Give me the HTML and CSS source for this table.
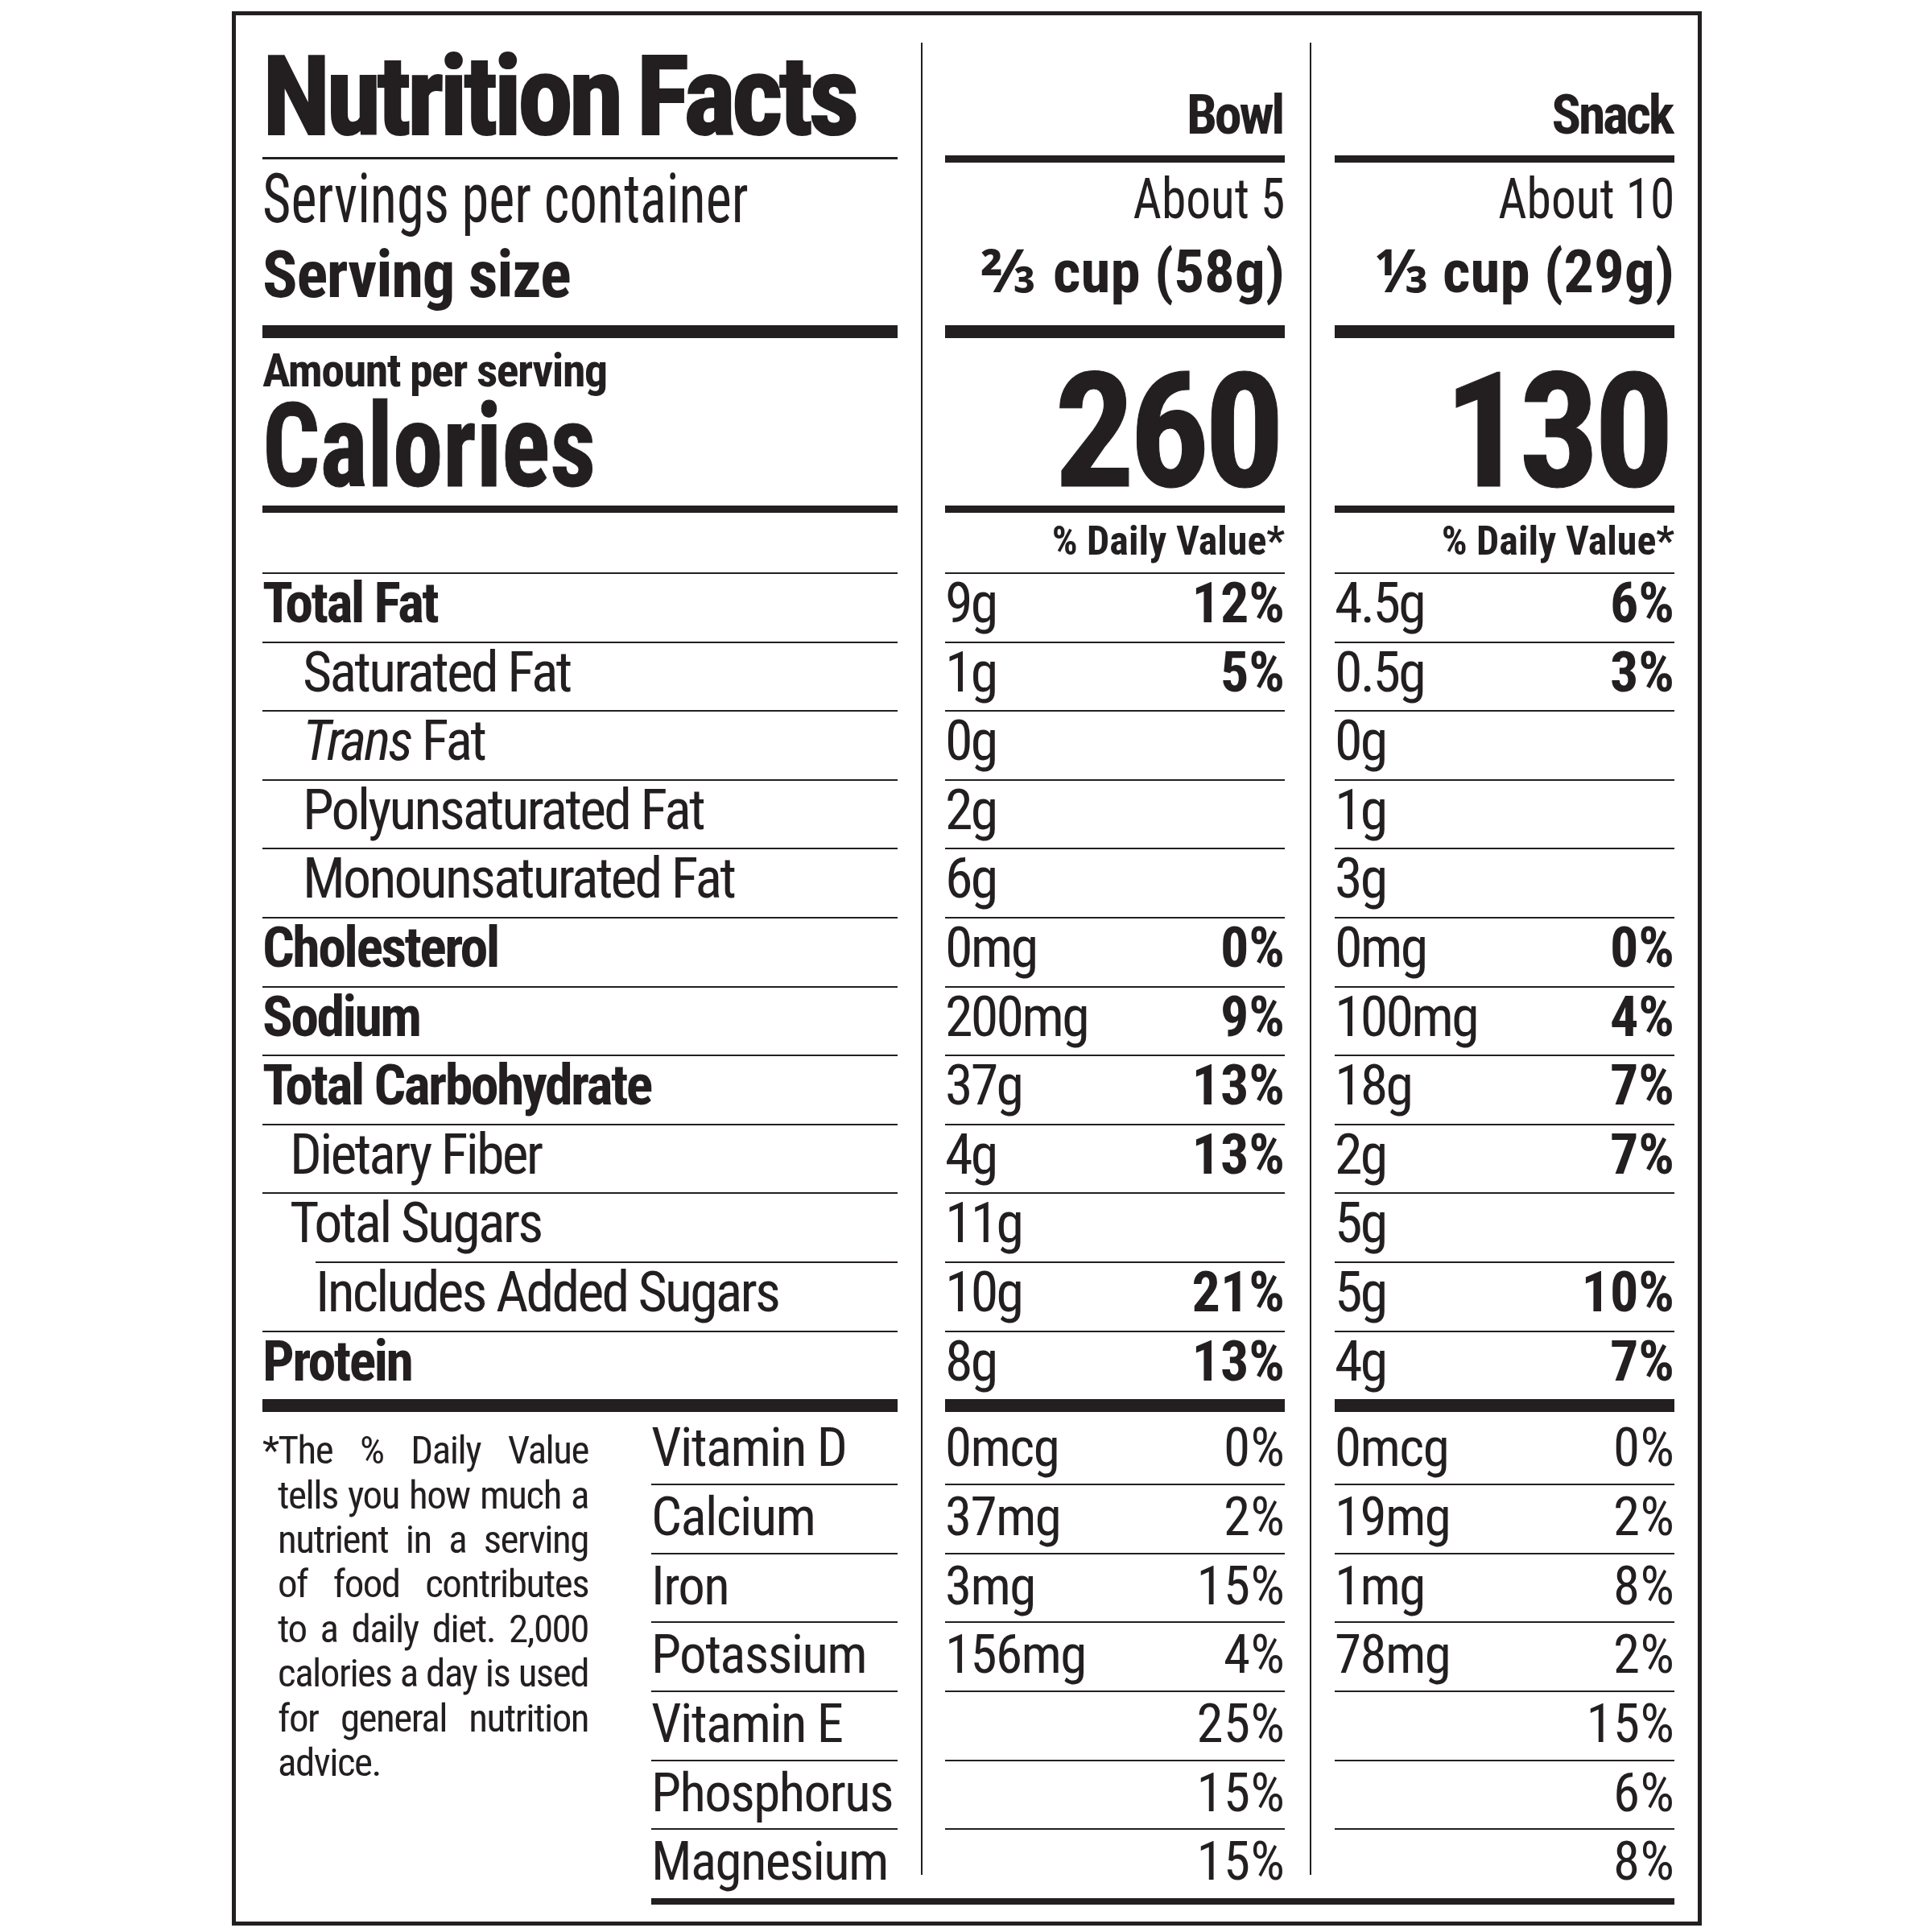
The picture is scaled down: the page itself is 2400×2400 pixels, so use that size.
FILE: index.html
```html
<!DOCTYPE html>
<html lang="en">
<head>
<meta charset="utf-8">
<title>Nutrition Facts</title>
<link rel="stylesheet" href="styles.css">
</head>
<body>
<div class="label">
  <div class="cols">
    <div class="col col-left">
      <div class="title">Nutrition Facts</div>
      <div class="serv-left">
        <div class="spc"><span class="sq sq-l">Servings per container</span></div>
        <div class="ssize">Serving size</div>
      </div>
      <div class="cal-left">
        <div class="aps">Amount per serving</div>
        <div class="calories"><span class="sq sq-l">Calories</span></div>
      </div>
      <div class="dv"></div>
      <div class="row"><span class="b">Total Fat</span></div>
      <div class="row"><span class="in1">Saturated Fat</span></div>
      <div class="row"><span class="in1"><i>Trans</i> Fat</span></div>
      <div class="row"><span class="in1">Polyunsaturated Fat</span></div>
      <div class="row"><span class="in1">Monounsaturated Fat</span></div>
      <div class="row"><span class="b">Cholesterol</span></div>
      <div class="row"><span class="b">Sodium</span></div>
      <div class="row"><span class="b">Total Carbohydrate</span></div>
      <div class="row"><span class="in2">Dietary Fiber</span></div>
      <div class="row"><span class="in2">Total Sugars</span></div>
      <div class="row row-added"><span>Includes Added Sugars</span></div>
      <div class="row"><span class="b">Protein</span></div>
      <div class="thick"></div>
      <div class="bottom">
        <div class="foot">
          <span class="fl first">*The % Daily Value</span>
          <span class="fl">tells you how much a</span>
          <span class="fl">nutrient in a serving</span>
          <span class="fl">of food contributes</span>
          <span class="fl">to a daily diet. 2,000</span>
          <span class="fl">calories a day is used</span>
          <span class="fl">for general nutrition</span>
          <span class="fl last">advice.</span>
        </div>
        <div class="vits">
          <div class="vrow">Vitamin D</div>
          <div class="vrow">Calcium</div>
          <div class="vrow">Iron</div>
          <div class="vrow">Potassium</div>
          <div class="vrow">Vitamin E</div>
          <div class="vrow">Phosphorus</div>
          <div class="vrow">Magnesium</div>
        </div>
      </div>
    </div>

    <div class="col col-num col-bowl">
      <div class="hdr">Bowl</div>
      <div class="serv">
        <div class="about"><span class="sq sq-r">About 5</span></div>
        <div class="size">⅔ cup (58g)</div>
      </div>
      <div class="cal"><div class="calnum">260</div></div>
      <div class="dv dvt">% Daily Value*</div>
      <div class="row"><span>9g</span><span class="pct">12%</span></div>
      <div class="row"><span>1g</span><span class="pct">5%</span></div>
      <div class="row"><span>0g</span></div>
      <div class="row"><span>2g</span></div>
      <div class="row"><span>6g</span></div>
      <div class="row"><span>0mg</span><span class="pct">0%</span></div>
      <div class="row"><span>200mg</span><span class="pct">9%</span></div>
      <div class="row"><span>37g</span><span class="pct">13%</span></div>
      <div class="row"><span>4g</span><span class="pct">13%</span></div>
      <div class="row"><span>11g</span></div>
      <div class="row"><span>10g</span><span class="pct">21%</span></div>
      <div class="row"><span>8g</span><span class="pct">13%</span></div>
      <div class="thick"></div>
      <div class="vrow"><span>0mcg</span><span class="pct">0%</span></div>
      <div class="vrow"><span>37mg</span><span class="pct">2%</span></div>
      <div class="vrow"><span>3mg</span><span class="pct">15%</span></div>
      <div class="vrow"><span>156mg</span><span class="pct">4%</span></div>
      <div class="vrow"><span></span><span class="pct">25%</span></div>
      <div class="vrow"><span></span><span class="pct">15%</span></div>
      <div class="vrow"><span></span><span class="pct">15%</span></div>
    </div>

    <div class="col col-num col-snack">
      <div class="hdr">Snack</div>
      <div class="serv">
        <div class="about"><span class="sq sq-r">About 10</span></div>
        <div class="size">⅓ cup (29g)</div>
      </div>
      <div class="cal"><div class="calnum">130</div></div>
      <div class="dv dvt">% Daily Value*</div>
      <div class="row"><span>4.5g</span><span class="pct">6%</span></div>
      <div class="row"><span>0.5g</span><span class="pct">3%</span></div>
      <div class="row"><span>0g</span></div>
      <div class="row"><span>1g</span></div>
      <div class="row"><span>3g</span></div>
      <div class="row"><span>0mg</span><span class="pct">0%</span></div>
      <div class="row"><span>100mg</span><span class="pct">4%</span></div>
      <div class="row"><span>18g</span><span class="pct">7%</span></div>
      <div class="row"><span>2g</span><span class="pct">7%</span></div>
      <div class="row"><span>5g</span></div>
      <div class="row"><span>5g</span><span class="pct">10%</span></div>
      <div class="row"><span>4g</span><span class="pct">7%</span></div>
      <div class="thick"></div>
      <div class="vrow"><span>0mcg</span><span class="pct">0%</span></div>
      <div class="vrow"><span>19mg</span><span class="pct">2%</span></div>
      <div class="vrow"><span>1mg</span><span class="pct">8%</span></div>
      <div class="vrow"><span>78mg</span><span class="pct">2%</span></div>
      <div class="vrow"><span></span><span class="pct">15%</span></div>
      <div class="vrow"><span></span><span class="pct">6%</span></div>
      <div class="vrow"><span></span><span class="pct">8%</span></div>
    </div>
  </div>
  <div class="endline"></div>
</div>
</body>
</html>
```

FILE: styles.css
```css
* { box-sizing: border-box; }

html, body {
  margin: 0;
  padding: 0;
  background: #ffffff;
}

body {
  color: #231f20;
  font-family: "Roboto Condensed", "Noto Sans", "DejaVu Sans", sans-serif;
  font-stretch: condensed;
}

.label {
  margin: 14px 0 0 288px;
  width: 1826px;
  height: 2378px;
  border: 5px solid #231f20;
  padding: 31px 29px 0 33px;
}

.cols {
  display: flex;
  align-items: flex-start;
}

.col { position: relative; }

.col-left { width: 789px; }

.col-num { width: 452px; padding-left: 30px; }
.col-bowl { margin-left: 29px; }
.col-snack { margin-left: 31px; width: 453px; padding-left: 31px; }

.col-num::before {
  content: "";
  position: absolute;
  left: 0;
  top: 3px;
  bottom: 28px;
  width: 2px;
  background: #231f20;
}

.b { font-weight: 700; }

/* narrow glyphs for the light condensed lines */
.sq { display: inline-block; }
.sq-l { transform-origin: left center; }
.sq-r { transform-origin: right center; }

/* ---------- header, left ---------- */
.title {
  height: 148px;
  padding-top: 1px;
  font-size: 138px;
  line-height: 138px;
  font-weight: 700;
  letter-spacing: -5px;
  word-spacing: -6px;
  white-space: nowrap;
  border-bottom: 3px solid #231f20;
  -webkit-text-stroke: 2px #231f20;
}

.serv-left {
  height: 222px;
  padding-top: 6px;
  border-bottom: 16px solid #231f20;
}

.spc {
  font-size: 86px;
  line-height: 86px;
  white-space: nowrap;
}

.spc .sq { transform: scaleX(0.795); }

.ssize {
  margin-top: 11px;
  font-size: 81px;
  line-height: 81px;
  font-weight: 700;
  letter-spacing: -1.3px;
  white-space: nowrap;
}

.cal-left {
  height: 217px;
  padding-top: 11px;
  border-bottom: 9px solid #231f20;
}

.aps {
  font-size: 58px;
  line-height: 58px;
  font-weight: 700;
  letter-spacing: -1.5px;
  white-space: nowrap;
}

.calories {
  margin-top: 6px;
  font-size: 144px;
  line-height: 120px;
  font-weight: 700;
  white-space: nowrap;
  -webkit-text-stroke: 1px #231f20;
}

.calories .sq { transform: scaleX(0.87); }

.dv {
  height: 74px;
  padding-top: 10px;
  font-size: 50px;
  line-height: 50px;
  font-weight: 700;
  text-align: right;
  white-space: nowrap;
}

/* ---------- header, number columns ---------- */
.hdr {
  height: 152px;
  padding-top: 59px;
  padding-right: 3px;
  font-size: 68px;
  line-height: 68px;
  font-weight: 700;
  letter-spacing: -3.3px;
  text-align: right;
  border-bottom: 9px solid #231f20;
}

.serv {
  height: 218px;
  padding-top: 9px;
  text-align: right;
  border-bottom: 16px solid #231f20;
  white-space: nowrap;
}

.about {
  font-size: 71px;
  line-height: 71px;
}

.about .sq { transform: scaleX(0.865); }

.size {
  margin-top: 18px;
  font-size: 75px;
  line-height: 75px;
  font-weight: 700;
}

.cal {
  height: 217px;
  padding-top: 24px;
  padding-right: 7px;
  border-bottom: 9px solid #231f20;
  text-align: right;
}

.calnum {
  font-size: 198px;
  line-height: 184px;
  font-weight: 700;
  letter-spacing: -7px;
  -webkit-text-stroke: 1px #231f20;
}

/* ---------- nutrient rows ---------- */
.row {
  height: 85.6px;
  border-top: 2px solid #231f20;
  padding-top: 1px;
  display: flex;
  justify-content: space-between;
  font-size: 70px;
  line-height: 70px;
  letter-spacing: -2.8px;
  white-space: nowrap;
}

.row .b { letter-spacing: -2.6px; }
.row .pct { font-weight: 700; letter-spacing: 0; }

.in1 { padding-left: 50px; }
.in2 { padding-left: 34px; }
.row-added { margin-left: 66px; }

.thick {
  height: 16px;
  background: #231f20;
}

/* ---------- bottom part ---------- */
.bottom {
  display: flex;
  align-items: flex-start;
}

.foot {
  width: 405px;
  padding-top: 20px;
  font-size: 49px;
  line-height: 55.4px;
  letter-spacing: -1.5px;
}

.fl {
  display: block;
  padding-left: 19px;
  text-align: justify;
  text-align-last: justify;
  white-space: nowrap;
}

.fl.first { padding-left: 0; }
.fl.last { text-align-last: left; }

.vits {
  margin-left: 78px;
  width: 306px;
}

.vrow {
  height: 85.6px;
  border-top: 2px solid #231f20;
  padding-top: 6px;
  display: flex;
  justify-content: space-between;
  font-size: 67px;
  line-height: 67px;
  letter-spacing: -1.6px;
  white-space: nowrap;
}

.vrow .pct {
  letter-spacing: 0.5px;
  margin-right: -0.5px;
}

.vits .vrow:first-child,
.thick + .vrow {
  height: 89px;
  border-top: 0;
  padding-top: 11px;
}

.endline {
  margin-left: 483px;
  width: 1271px;
  height: 8px;
  margin-top: 1px;
  background: #231f20;
}
```
